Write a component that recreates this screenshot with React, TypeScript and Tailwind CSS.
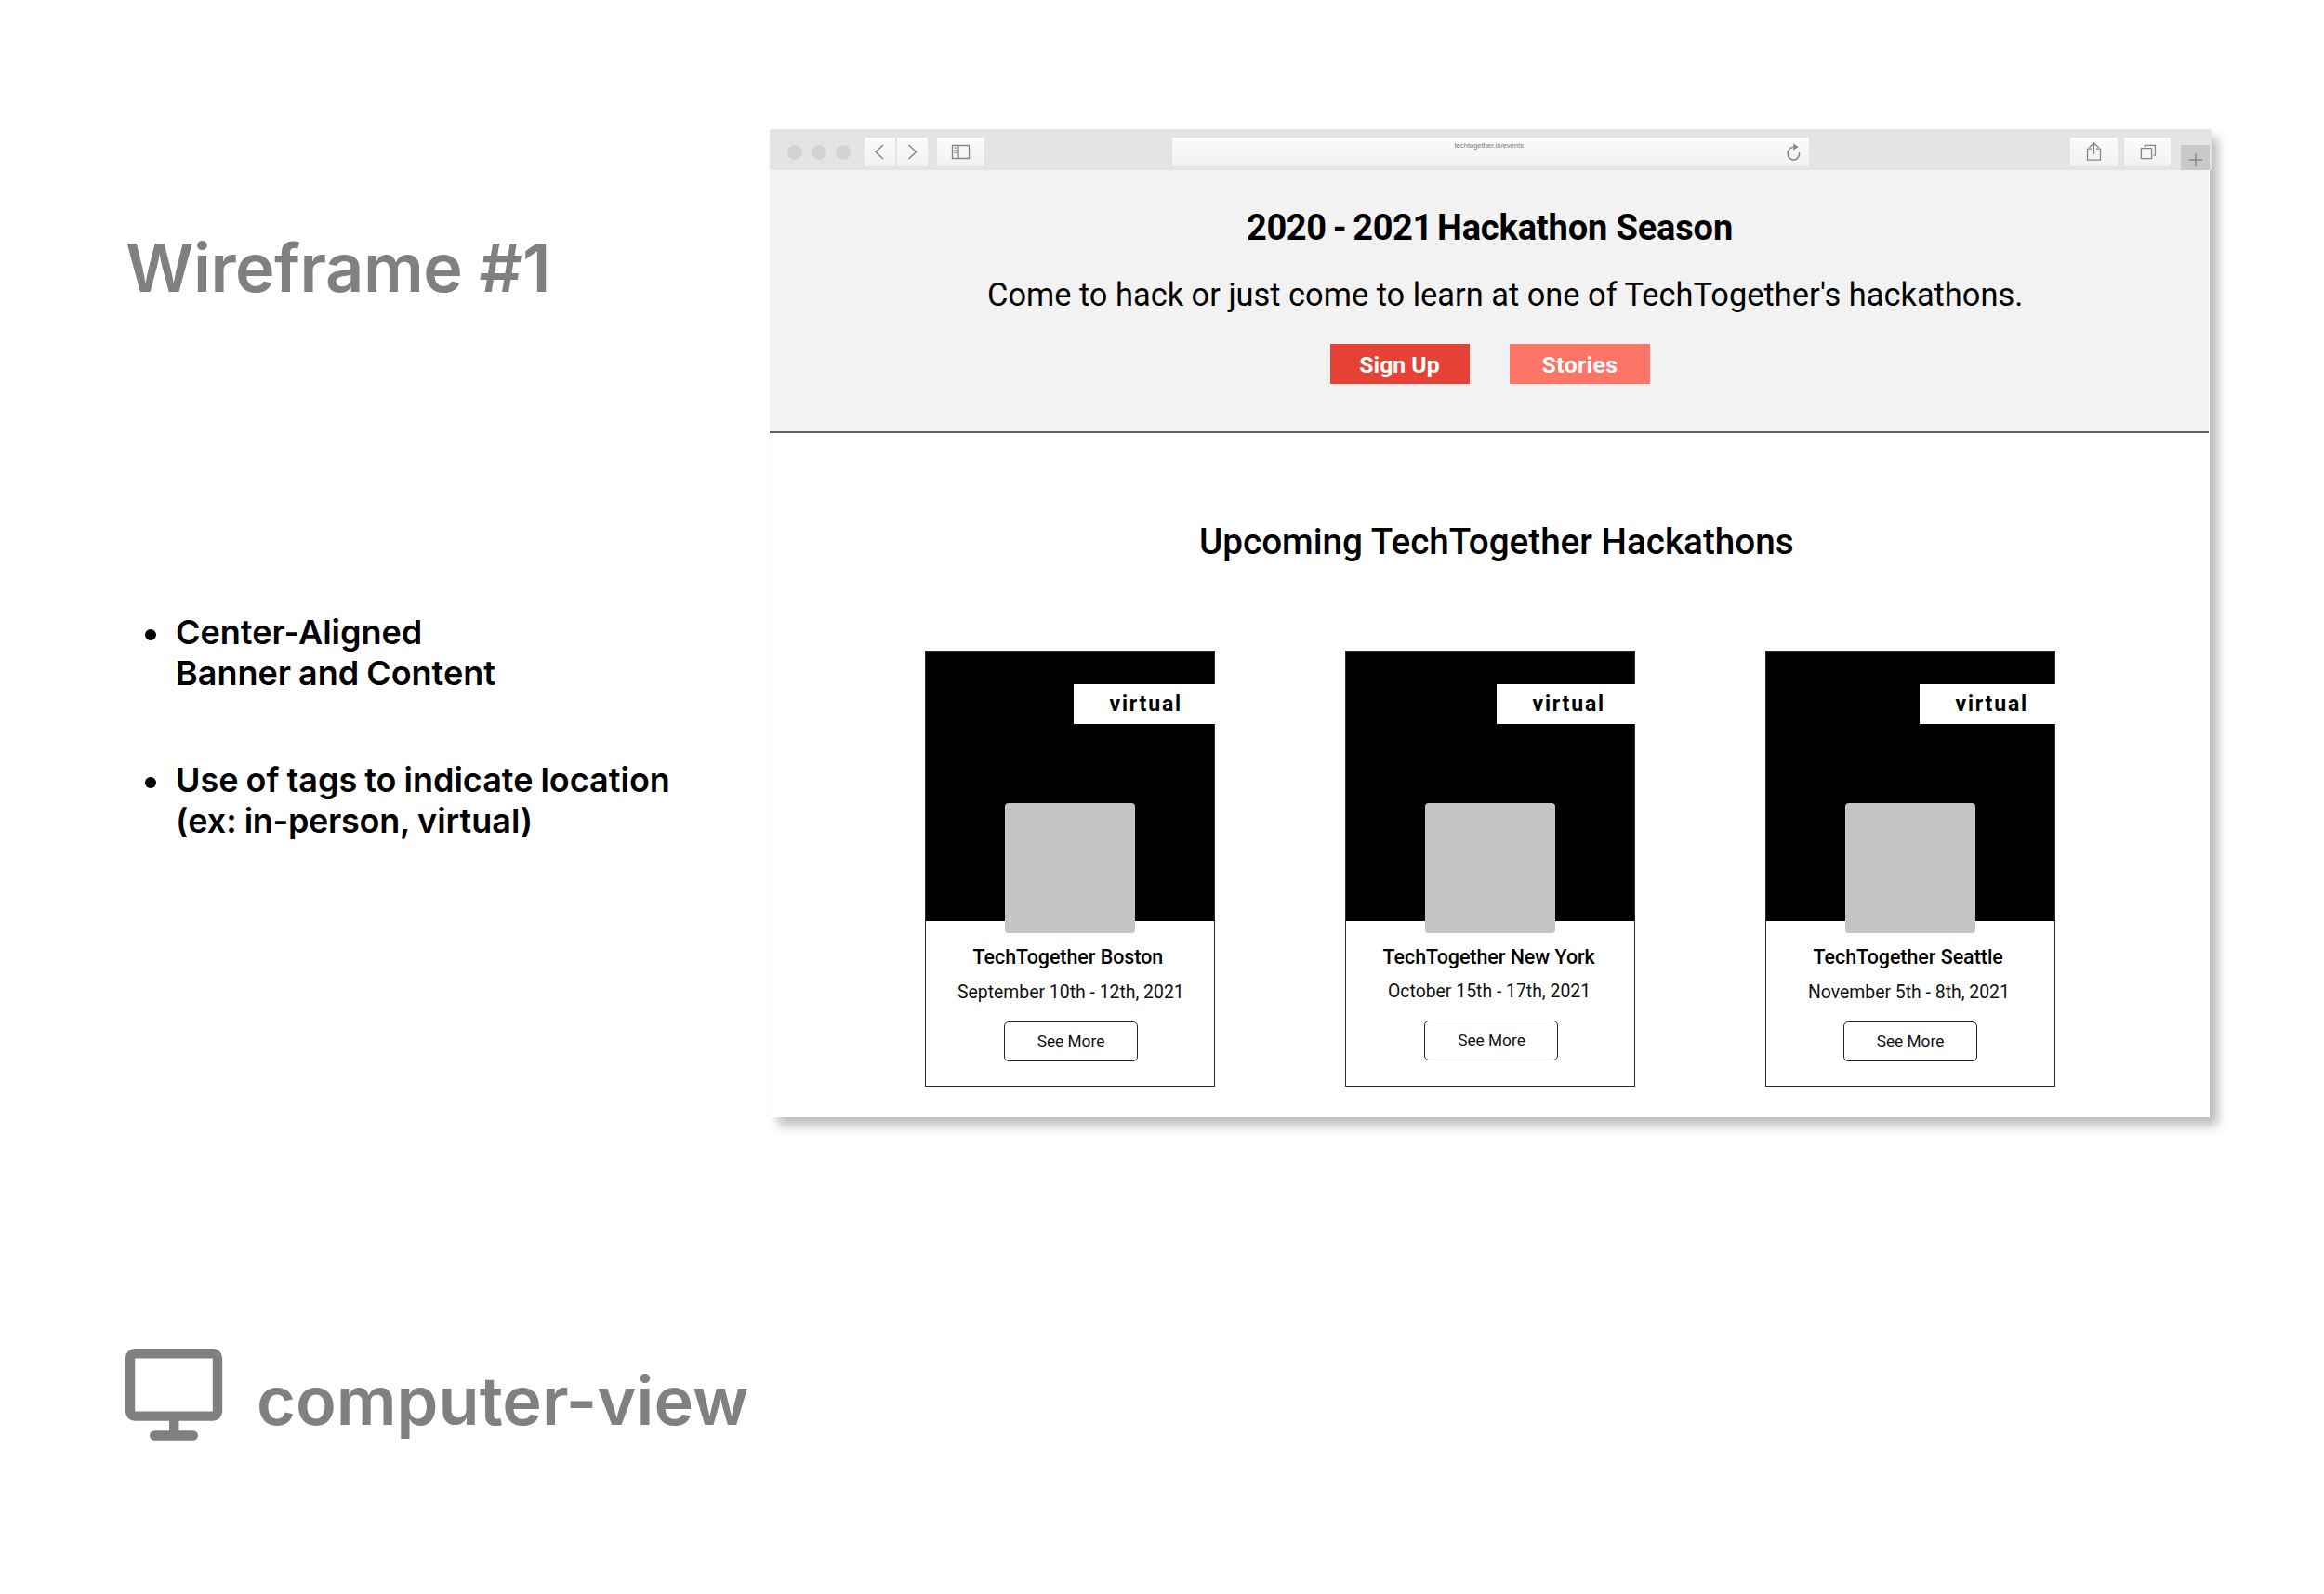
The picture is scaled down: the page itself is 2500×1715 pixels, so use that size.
import React from "react";

type Event = {
  name: string;
  date: string;
  card: string;
  tag: string;
  thumb: string;
  title: string;
  when: string;
  button: string;
};

const events: Event[] = [
  {
    name: "TechTogether Boston",
    date: "September 10th - 12th, 2021",
    card: "w-[312px]",
    tag: "w-[152px]",
    thumb: "left-[85px]",
    title: "mt-[26px] pl-[50.5px]",
    when: "mt-[13px] pl-[34px]",
    button: "mt-[19px] ml-[83.5px]",
  },
  {
    name: "TechTogether New York",
    date: "October 15th - 17th, 2021",
    card: "ml-[140px] w-[312px]",
    tag: "w-[149px]",
    thumb: "left-[85px]",
    title: "mt-[26px] pl-[39.5px]",
    when: "mt-[12px] pl-[45px]",
    button: "mt-[19px] ml-[84px]",
  },
  {
    name: "TechTogether Seattle",
    date: "November 5th - 8th, 2021",
    card: "ml-[140px] w-[312px]",
    tag: "w-[146px]",
    thumb: "left-[85px]",
    title: "mt-[26px] pl-[50.5px]",
    when: "mt-[13px] pl-[45px]",
    button: "mt-[19px] ml-[82.5px]",
  },
];

function ChromeButton({ className, children }: { className: string; children?: React.ReactNode }) {
  return (
    <div
      className={`mt-[9px] flex h-[31px] shrink-0 items-center justify-center rounded-[2px] bg-linear-to-b from-[#fcfcfc] to-[#f1f1f1] ${className}`}
    >
      {children}
    </div>
  );
}

function Toolbar() {
  return (
    <div className="flex h-[44px] w-[1551px] items-start rounded-t-[3px] bg-[#e4e4e4] pl-[19px]">
      <div className="mt-[17px] flex gap-[10px]">
        <span className="size-4 rounded-full bg-[#d3d3d3]" />
        <span className="size-4 rounded-full bg-[#d3d3d3]" />
        <span className="size-4 rounded-full bg-[#d3d3d3]" />
      </div>
      <ChromeButton className="ml-[15px] w-[33px]">
        <svg width="33" height="31" viewBox="0 0 33 31" fill="none" stroke="#868686" strokeWidth="1.5">
          <path d="M20 8 L12 15.5 L20 23" />
        </svg>
      </ChromeButton>
      <ChromeButton className="ml-[2px] w-[33px]">
        <svg width="33" height="31" viewBox="0 0 33 31" fill="none" stroke="#868686" strokeWidth="1.5">
          <path d="M12.5 8 L20.5 15.5 L12.5 23" />
        </svg>
      </ChromeButton>
      <ChromeButton className="ml-[10px] w-[51px]">
        <svg width="51" height="31" viewBox="0 0 51 31" fill="none" stroke="#868686">
          <path d="M16.5 8.5 H34.5 V22.5 H16.5 Z M23 8.5 V22.5" strokeWidth="1.3" />
          <path d="M18.3 11.2 H21.3 M18.3 13.8 H21.3 M18.3 16.4 H21.3" strokeWidth="1" />
        </svg>
      </ChromeButton>
      <div className="mt-[9px] ml-[202px] flex h-[31px] w-[685px] shrink-0 rounded-[2px] bg-linear-to-b from-[#fcfcfc] to-[#f1f1f1]">
        <span className="mt-[3px] ml-[303.5px] h-[11px] w-[357.5px] font-['Liberation_Sans'] text-[7.62px] leading-[11px] whitespace-nowrap text-[#777]">
          techtogether.io/events
        </span>
        <svg width="16" height="20" viewBox="0 0 16 20" className="mt-[6px]" fill="none">
          <path d="M7.2 4.2 A6.3 6.9 0 1 0 13.6 10" stroke="#868686" strokeWidth="1.5" />
          <path d="M7.2 0.6 L12.6 4 L7.2 7.8 Z" fill="#868686" />
        </svg>
      </div>
      <ChromeButton className="ml-[281px] w-[51px]">
        <svg width="51" height="31" viewBox="0 0 51 31" fill="none" stroke="#868686" strokeWidth="1.3">
          <path d="M23 12.2 H18.5 V24.2 H32.5 V12.2 H28 M25.5 18 V5.8 M20.4 10.8 L25.5 5.8 L30.6 10.8" />
        </svg>
      </ChromeButton>
      <ChromeButton className="ml-[7px] w-[50px]">
        <svg width="50" height="31" viewBox="0 0 50 31" fill="none" stroke="#868686" strokeWidth="1.3">
          <path d="M18.4 11.7 H29.6 V22.7 H18.4 Z M22.3 10 V8.3 H33.4 V19.2 H31.4" />
        </svg>
      </ChromeButton>
      <div className="mt-[17px] ml-[11px] h-[27px] w-[31px] shrink-0 bg-[#c9c9c9]">
        <svg width="31" height="27" viewBox="0 0 31 27" fill="none" stroke="#868686" strokeWidth="1.4">
          <path d="M9 16 H23 M16 9 V23" />
        </svg>
      </div>
    </div>
  );
}

function EventCard({ event }: { event: Event }) {
  return (
    <div className={`relative h-[469px] shrink-0 border border-[#2a2a2a] bg-white whitespace-nowrap ${event.card}`}>
      <div className="h-[290px] bg-black" />
      <div
        className={`absolute top-[35px] -right-px flex h-[43px] items-center bg-white pt-px pl-[38.5px] text-[23px] font-bold tracking-[1.8px] text-black ${event.tag}`}
      >
        virtual
      </div>
      <div className={`absolute top-[163px] size-[140px] rounded-[4px] bg-[#c4c4c4] ${event.thumb}`} />
      <h3 className={`text-[21.4px] leading-[26px] font-medium ${event.title}`}>{event.name}</h3>
      <p className={`text-[19.4px] leading-[24px] text-[#111] ${event.when}`}>{event.date}</p>
      <button
        className={`flex h-[43px] w-[144px] items-center justify-center rounded-[5px] border border-[#222] pl-px text-[17.3px] text-[#111] ${event.button}`}
      >
        See More
      </button>
    </div>
  );
}

export default function App() {
  return (
    <div className="flex h-[1715px] w-[2500px] overflow-hidden bg-white text-black">
      <aside className="flex w-[828px] shrink-0 flex-col font-['Inter'] font-semibold whitespace-nowrap">
        <h1 className="mt-[243.5px] ml-[135px] text-[72px] leading-[88px] text-[#808080]">
          <span className="tracking-[-0.45px]">Wireframe</span> #1
        </h1>
        <ul className="mt-[326px] ml-[156px] flex flex-col gap-[71px] text-[36px] leading-[44px] [word-spacing:-1.1px]">
          <li className="flex">
            <span className="mt-[19px] mr-[21px] size-[12px] rounded-full bg-black" />
            <span>
              Center-Aligned
              <br />
              Banner and Content
            </span>
          </li>
          <li className="flex">
            <span className="mt-[19px] mr-[21px] size-[12px] rounded-full bg-black" />
            <span>
              Use of tags to indicate location
              <br />
              (ex: <span className="tracking-[-0.3px]">in-person,</span> virtual)
            </span>
          </li>
        </ul>
        <div className="mt-[545px] ml-[134px] flex text-[72px] leading-[88px] text-[#808080]">
          <svg width="106" height="100" viewBox="0 0 106 100" fill="none" stroke="#808080" strokeWidth="10.4">
            <rect x="6" y="6.2" width="94" height="67.4" rx="5" />
            <path d="M53.2 74 V94" />
            <path d="M32.2 94.5 H73.8" strokeLinecap="round" />
          </svg>
          <span className="mt-[13.5px] ml-[36px]">computer-view</span>
        </div>
      </aside>

      <main className="mt-[139px] h-[1063px] w-[1549px] shrink-0 font-['Roboto']">
        <div className="relative h-[1063px] rounded-t-[3px] bg-white shadow-[9px_9px_12px_rgba(0,0,0,0.27)]">
          <Toolbar />
          <section className="h-[283px] w-[1548px] border-b-2 border-[#606060] bg-[#f2f2f2] pt-[38.5px] pl-px whitespace-nowrap">
            <h2 className="flex pl-[512px] text-[38px] leading-[46px] font-bold">
              <span className="w-[205px] tracking-[-0.4px] [word-spacing:-2px]">2020 - 2021</span>
              <span className="tracking-[-0.15px]">Hackathon Season</span>
            </h2>
            <p className="mt-[28.5px] pl-[233px] text-[34.4px] leading-[42px]">
              Come to hack or just come to learn at one of TechTogether's hackathons.
            </p>
            <div className="mt-[32px] flex gap-[43px] pl-[602px] text-[24.8px] font-bold text-white">
              <button className="flex h-[43px] w-[150px] items-center justify-center bg-[#e64236] pt-[3px] pr-px">
                Sign Up
              </button>
              <button className="flex h-[43px] w-[151px] items-center justify-center bg-[#fc7566] pt-[3px] tracking-[0.4px]">
                Stories
              </button>
            </div>
          </section>
          <section className="pt-[94px] pl-px">
            <h2 className="pl-[461px] text-[38.65px] leading-[46px] font-medium whitespace-nowrap">
              Upcoming TechTogether Hackathons
            </h2>
            <div className="mt-[94px] flex pl-[166px]">
              {events.map((event) => (
                <EventCard key={event.name} event={event} />
              ))}
            </div>
          </section>
        </div>
      </main>
    </div>
  );
}
